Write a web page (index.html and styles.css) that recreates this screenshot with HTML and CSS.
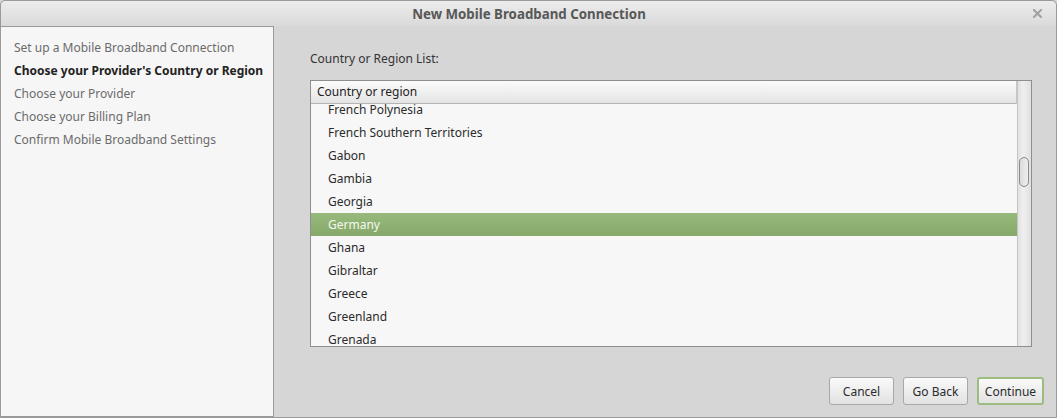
FILE: index.html
```html
<!DOCTYPE html>
<html lang="en">
<head>
    <meta charset="UTF-8">
    <title>New Mobile Broadband Connection</title>
    <link rel="stylesheet" href="styles.css">
</head>
<body>
    <div class="window">
        <div class="titlebar">
            <span class="title">New Mobile Broadband Connection</span>
            <svg class="close" width="9" height="9" viewBox="0 0 9 9">
                <path d="M1 1 L8 8 M8 1 L1 8" stroke="#a0a0a0" stroke-width="2" stroke-linecap="square"/>
            </svg>
        </div>
        <div class="content">
            <div class="sidebar">
                <div class="step">Set up a Mobile Broadband Connection</div>
                <div class="step current">Choose your Provider's Country or Region</div>
                <div class="step">Choose your Provider</div>
                <div class="step">Choose your Billing Plan</div>
                <div class="step">Confirm Mobile Broadband Settings</div>
            </div>
            <div class="main">
                <div class="label">Country or Region List:</div>
                <div class="list">
                    <div class="list-view">
                        <div class="list-header">Country or region</div>
                        <div class="list-body">
                            <div class="rows">
                                <div class="row">French Polynesia</div>
                                <div class="row">French Southern Territories</div>
                                <div class="row">Gabon</div>
                                <div class="row">Gambia</div>
                                <div class="row">Georgia</div>
                                <div class="row selected">Germany</div>
                                <div class="row">Ghana</div>
                                <div class="row">Gibraltar</div>
                                <div class="row">Greece</div>
                                <div class="row">Greenland</div>
                                <div class="row">Grenada</div>
                            </div>
                        </div>
                    </div>
                    <div class="scrollbar">
                        <div class="thumb"></div>
                    </div>
                </div>
                <div class="buttons">
                    <button class="btn">Cancel</button>
                    <button class="btn">Go Back</button>
                    <button class="btn default">Continue</button>
                </div>
            </div>
        </div>
    </div>
</body>
</html>
```

FILE: styles.css
```css
* {
    margin: 0;
    padding: 0;
    box-sizing: border-box;
}

body {
    font-family: "Noto Sans", "DejaVu Sans", sans-serif;
    font-size: 12px;
    background: #d6d6d6;
    width: 1057px;
    height: 418px;
    overflow: hidden;
}

.window {
    width: 1057px;
    height: 418px;
    border: 1px solid #9a9a9a;
    border-radius: 5px 5px 0 0;
    display: flex;
    flex-direction: column;
    background: #d6d6d6;
}

.titlebar {
    height: 25px;
    flex: none;
    background: linear-gradient(#ececec, #dadada);
    display: flex;
    align-items: center;
    justify-content: center;
    position: relative;
    border-radius: 5px 5px 0 0;
}

.title {
    font-weight: bold;
    font-size: 13.3px;
    color: #585858;
    margin-left: 1px;
}

.close {
    position: absolute;
    right: 14px;
    top: 8px;
}

.content {
    flex: 1;
    display: flex;
}

.sidebar {
    width: 273px;
    flex: none;
    background: #f6f6f6;
    border-top: 1px solid #9a9a9a;
    border-right: 1px solid #9a9a9a;
    border-bottom: 1px solid #9a9a9a;
    padding: 9px 0 0 13px;
}

.step {
    height: 23px;
    line-height: 23px;
    color: #6b6b6b;
    white-space: nowrap;
}

.step.current {
    font-weight: bold;
    color: #222;
}

.main {
    flex: 1;
    display: flex;
    flex-direction: column;
    padding: 23px 24px 12px 36px;
}

.label {
    color: #333;
    height: 20px;
    line-height: 20px;
    margin-bottom: 11px;
}

.list {
    display: flex;
    height: 267px;
    border: 1px solid #8e8e8e;
    background: #f7f7f7;
}

.list-view {
    flex: 1;
    display: flex;
    flex-direction: column;
    overflow: hidden;
}

.list-header {
    height: 23px;
    flex: none;
    line-height: 21px;
    padding-left: 6px;
    color: #222;
    background: linear-gradient(#fbfbfb, #e4e4e4);
    border-bottom: 1px solid #b4b4b4;
    border-right: 1px solid #c8c8c8;
}

.list-body {
    flex: 1;
    overflow: hidden;
}

.rows {
    margin-top: -6px;
}

.row {
    height: 23px;
    line-height: 23px;
    padding-left: 17px;
    color: #2b2b2b;
}

.row.selected {
    background: linear-gradient(#98b97c, #86a96a);
    color: #f4f7ef;
}

.scrollbar {
    width: 14px;
    flex: none;
    background: linear-gradient(90deg, #e2e2e2, #efefef 40%, #e0e0e0);
    border-left: 1px solid #c4c4c4;
    padding-top: 76px;
}

.thumb {
    width: 10px;
    height: 30px;
    margin-left: 1px;
    border: 1px solid #8a8a8a;
    border-radius: 5px;
    background: linear-gradient(90deg, #dcdcdc, #eeeeee);
}

.buttons {
    margin-top: auto;
    display: flex;
    justify-content: flex-end;
    gap: 9px;
    margin-right: -12px;
}

.btn {
    font-family: inherit;
    font-size: 12px;
    width: 65px;
    height: 28px;
    color: #2b2b2b;
    border: 1px solid #a8a8a8;
    border-radius: 3px;
    background: linear-gradient(#fafafa, #e2e2e2);
}

.btn.default {
    width: 67px;
    border: 2px solid #9cbc80;
}
```
